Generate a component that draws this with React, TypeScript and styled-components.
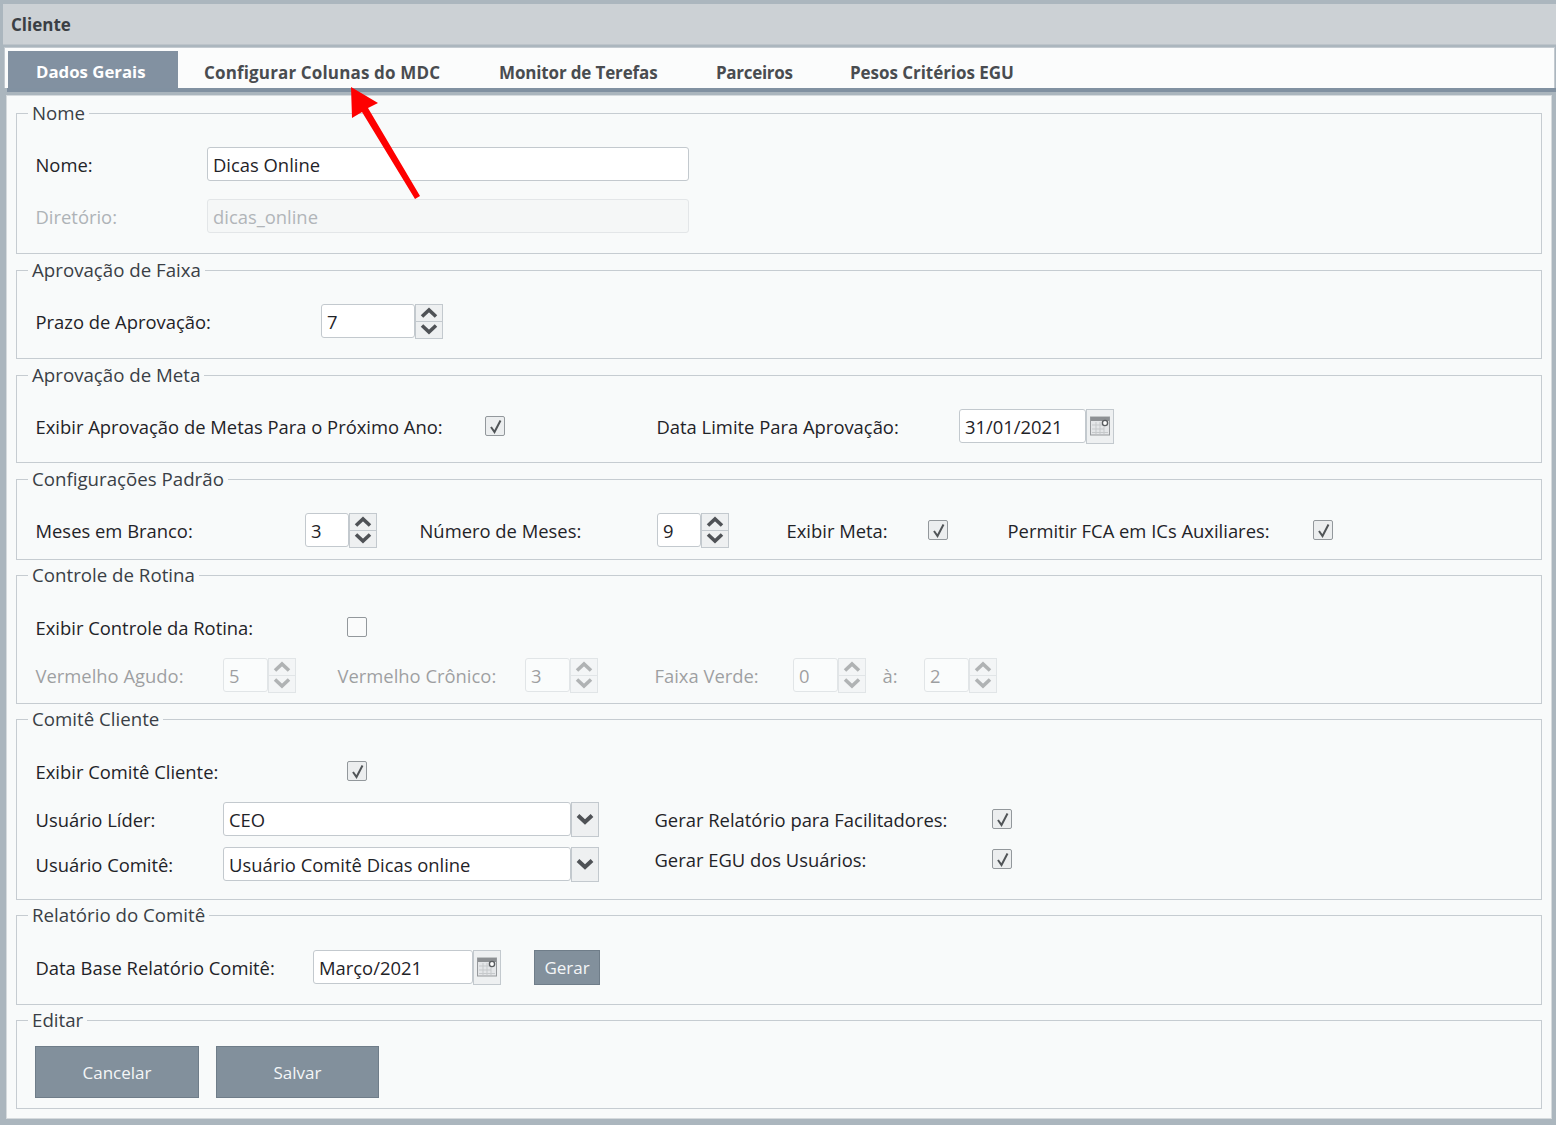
import React from "react";
import styled, { createGlobalStyle } from "styled-components";

const Global = createGlobalStyle`
  html, body { margin: 0; padding: 0; background: #abb6be; }
  body { font-family: "Open Sans", "Noto Sans", sans-serif; color: #1f2328; }
  * { box-sizing: border-box; }
`;

const Page = styled.div`
  position: relative;
  width: 1556px;
  height: 1125px;
  padding: 4px 0 0 3px;
  overflow: hidden;
`;
const Title = styled.div`
  height: 41px;
  background: #ccd1d5;
  border-bottom: 1px solid #bcc3c9;
  padding-left: 8px;
  display: flex;
  align-items: center;
  font-size: 17px;
  font-weight: 700;
  color: #3b3f44;
`;
const TabBar = styled.div`
  margin: 2px 0 0 1px;
  height: 41px;
  background: #fbfcfc;
  border: 1px solid #c3cad0;
  border-bottom: none;
  padding: 3px 0 0 3px;
  display: flex;
  width: 1551px;
`;
const ActiveTab = styled.div`
  flex: none;
  width: 170px;
  margin-right: 26px;
  padding: 3px 0 0 28px;
  display: flex;
  align-items: center;
  font-size: 16.8px;
  font-weight: 700;
  color: #ffffff;
  background: #8291a1;
`;
const Tab = styled.div<{ $w: number; $spacing?: number }>`
  flex: none;
  width: ${(p) => p.$w}px;
  padding-top: 5px;
  display: flex;
  align-items: center;
  font-size: 17px;
  font-weight: 700;
  letter-spacing: ${(p) => p.$spacing ?? 0}px;
  color: #494c50;
`;
const TabRule = styled.div`
  margin-left: 4px;
  width: 1550px;
  height: 7px;
  background: linear-gradient(#8191a1 0 4px, #aab5bd 4px);
`;
const Panel = styled.div`
  margin-left: 3px;
  width: 1546px;
  height: 1024px;
  background: #f8fafa;
  border: 1px solid #d5dadd;
  padding: 6px 9px;
  display: flex;
  flex-direction: column;
  gap: 5px;
`;
const Group = styled.fieldset<{ $top: number; $bottom: number; $gap?: number; $tight?: boolean }>`
  margin: ${(p) => (p.$tight ? "-1px 0 0" : "0")};
  min-width: 0;
  border: 1px solid #c6ccd1;
  padding: ${(p) => p.$top}px 19px ${(p) => p.$bottom}px;
  display: flex;
  flex-direction: column;
  gap: ${(p) => p.$gap ?? 14}px;
`;
const Legend = styled.legend`
  margin-left: -8px;
  padding: 0 4px;
  font-size: 18.7px;
  line-height: 22px;
  color: #3a3f46;
`;
const Row = styled.div<{ $muted?: boolean }>`
  height: 34px;
  display: flex;
  align-items: center;
  opacity: ${(p) => (p.$muted ? 0.42 : 1)};
`;
const Label = styled.label<{ $w: number }>`
  flex: none;
  width: ${(p) => p.$w}px;
  font-size: 18.4px;
  line-height: 34px;
  padding-top: 2px;
  text-indent: -0.5px;
  color: #1f2328;
  white-space: nowrap;
`;
const Muted = styled(Label)`
  color: #aeb3b7;
`;
const Input = styled.div<{ $w: number; $disabled?: boolean }>`
  flex: none;
  width: ${(p) => p.$w}px;
  height: 34px;
  background: ${(p) => (p.$disabled ? "#f5f7f7" : "#ffffff")};
  border: 1px solid ${(p) => (p.$disabled ? "#e3e6e8" : "#c3c9ce")};
  border-radius: 3px;
  padding: 1px 0 0 5px;
  font-size: 18.4px;
  line-height: 32px;
  color: ${(p) => (p.$disabled ? "#b1b5b9" : "#1f2328")};
`;
const Side = styled.div<{ $w: number }>`
  flex: none;
  width: ${(p) => p.$w}px;
  height: 35px;
  background: #eef0f1;
  border: 1px solid #c3c9ce;
  display: flex;
  align-items: center;
  justify-content: center;
`;
const SpinWrap = styled.div`
  flex: none;
  width: 28px;
  height: 35px;
  display: flex;
  flex-direction: column;
  background: #eef0f1;
  border: 1px solid #c3c9ce;
`;
const SpinPart = styled.div`
  flex: 1;
  display: flex;
  align-items: center;
  justify-content: center;
  & + & { border-top: 1px solid #c3c9ce; }
`;
const Check = styled.div<{ $off?: boolean }>`
  flex: none;
  width: 20px;
  height: 20px;
  background: ${(p) => (p.$off ? "#fafbfb" : "#eceeef")};
  border: 1.5px solid #93989c;
  border-radius: 2px;
  display: flex;
  align-items: center;
  justify-content: center;
`;
const Gap = styled.div<{ $w: number }>`
  flex: none;
  width: ${(p) => p.$w}px;
`;
const Columns = styled.div`
  display: flex;
  align-items: flex-start;
`;
const Column = styled.div<{ $w: number; $gap: number }>`
  flex: none;
  width: ${(p) => p.$w}px;
  display: flex;
  flex-direction: column;
  gap: ${(p) => p.$gap}px;
`;
const Button = styled.button<{ $w: number; $h: number }>`
  flex: none;
  width: ${(p) => p.$w}px;
  height: ${(p) => p.$h}px;
  margin: 0;
  padding: 1px 0 0;
  background: #82909c;
  border: 1px solid #6f7d89;
  color: #f4f6f7;
  font-family: inherit;
  font-size: 17px;
`;
const ButtonRow = styled.div`
  display: flex;
  gap: 17px;
  margin-left: -1px;
`;
const Arrow = styled.svg`
  position: absolute;
  left: 340px;
  top: 80px;
`;

const Chevron = ({ up, sw = 3.6 }: { up?: boolean; sw?: number }) => (
  <svg width="18" height="11" viewBox="0 0 18 11">
    <path d={up ? "M2 9.5 9 3l7 6.5" : "M2 1.5 9 8l7-6.5"} fill="none" stroke="#4f5256" strokeWidth={sw} />
  </svg>
);
const Spin = () => (
  <SpinWrap>
    <SpinPart><Chevron up /></SpinPart>
    <SpinPart><Chevron /></SpinPart>
  </SpinWrap>
);
const Drop = () => (
  <Side $w={28}><Chevron sw={4} /></Side>
);
const Tick = () => (
  <svg width="15" height="15" viewBox="0 0 15 15">
    <path d="M3 8 6.5 13 12.5 1.5" fill="none" stroke="#505457" strokeWidth="2" />
  </svg>
);
const Calendar = () => (
  <svg width="20" height="20" viewBox="0 0 20 20">
    <rect x="0.5" y="1" width="19" height="18" fill="#e4e6e8" stroke="#96999c" />
    <rect x="1" y="1" width="18" height="4" fill="#8d9093" />
    <path d="M2 9h12M2 13h12M2 16.5h16M6 6v12M10 6v12M14 6v12" stroke="#c6c9cb" strokeWidth="1" />
    <circle cx="15" cy="7" r="2.6" fill="#fff" stroke="#5a5d60" strokeWidth="1.4" />
  </svg>
);

export default function App() {
  return (
    <Page>
      <Global />
      <Title>Cliente</Title>
      <TabBar>
        <ActiveTab>Dados Gerais</ActiveTab>
        <Tab $w={295} $spacing={0.15}>Configurar Colunas do MDC</Tab>
        <Tab $w={217} $spacing={-0.15}>Monitor de Terefas</Tab>
        <Tab $w={134} $spacing={-0.3}>Parceiros</Tab>
        <Tab $w={180} $spacing={-0.05}>Pesos Critérios EGU</Tab>
      </TabBar>
      <TabRule />
      <Panel>
        <Group $top={23} $bottom={20} $gap={18}>
          <Legend>Nome</Legend>
          <Row><Label $w={171}>Nome:</Label><Input $w={482}>Dicas Online</Input></Row>
          <Row><Muted $w={171}>Diretório:</Muted><Input $w={482} $disabled>dicas_online</Input></Row>
        </Group>
        <Group $top={23} $bottom={20}>
          <Legend>Aprovação de Faixa</Legend>
          <Row><Label $w={285}>Prazo de Aprovação:</Label><Input $w={94}>7</Input><Spin /></Row>
        </Group>
        <Group $top={23} $bottom={19}>
          <Legend>Aprovação de Meta</Legend>
          <Row>
            <Label $w={449}>Exibir Aprovação de Metas Para o Próximo Ano:</Label>
            <Check><Tick /></Check>
            <Gap $w={152} />
            <Label $w={302}>Data Limite Para Aprovação:</Label>
            <Input $w={127}>31/01/2021</Input>
            <Side $w={28}><Calendar /></Side>
          </Row>
        </Group>
        <Group $top={23} $bottom={12}>
          <Legend>Configurações Padrão</Legend>
          <Row>
            <Label $w={269}>Meses em Branco:</Label><Input $w={44}>3</Input><Spin />
            <Gap $w={43} />
            <Label $w={237}>Número de Meses:</Label><Input $w={44}>9</Input><Spin />
            <Gap $w={58} />
            <Label $w={141}>Exibir Meta:</Label><Check><Tick /></Check>
            <Gap $w={60} />
            <Label $w={305}>Permitir FCA em ICs Auxiliares:</Label><Check><Tick /></Check>
          </Row>
        </Group>
        <Group $top={24} $bottom={11} $gap={14} $tight>
          <Legend>Controle de Rotina</Legend>
          <Row><Label $w={311}>Exibir Controle da Rotina:</Label><Check $off /></Row>
          <Row $muted>
            <Label $w={187}>Vermelho Agudo:</Label><Input $w={45}>5</Input><Spin />
            <Gap $w={42} />
            <Label $w={187}>Vermelho Crônico:</Label><Input $w={45}>3</Input><Spin />
            <Gap $w={57} />
            <Label $w={138}>Faixa Verde:</Label><Input $w={45}>0</Input><Spin />
            <Gap $w={17} />
            <Label $w={41}>à:</Label><Input $w={45}>2</Input><Spin />
          </Row>
        </Group>
        <Group $top={24} $bottom={18} $gap={14} $tight>
          <Legend>Comitê Cliente</Legend>
          <Row><Label $w={311}>Exibir Comitê Cliente:</Label><Check><Tick /></Check></Row>
          <Columns>
            <Column $w={619} $gap={11}>
              <Row><Label $w={187}>Usuário Líder:</Label><Input $w={348}>CEO</Input><Drop /></Row>
              <Row><Label $w={187}>Usuário Comitê:</Label><Input $w={348}>Usuário Comitê Dicas online</Input><Drop /></Row>
            </Column>
            <Column $w={400} $gap={6}>
              <Row><Label $w={337}>Gerar Relatório para Facilitadores:</Label><Check><Tick /></Check></Row>
              <Row><Label $w={337}>Gerar EGU dos Usuários:</Label><Check><Tick /></Check></Row>
            </Column>
          </Columns>
        </Group>
        <Group $top={24} $bottom={20} $tight>
          <Legend>Relatório do Comitê</Legend>
          <Row>
            <Label $w={277}>Data Base Relatório Comitê:</Label>
            <Input $w={160}>Março/2021</Input>
            <Side $w={28}><Calendar /></Side>
            <Gap $w={33} />
            <Button $w={66} $h={35}>Gerar</Button>
          </Row>
        </Group>
        <Group $top={15} $bottom={10} $tight>
          <Legend>Editar</Legend>
          <ButtonRow>
            <Button $w={164} $h={52}>Cancelar</Button>
            <Button $w={163} $h={52}>Salvar</Button>
          </ButtonRow>
        </Group>
      </Panel>
      <Arrow width="90" height="125" viewBox="340 80 90 125">
        <path d="M351 87 378 103 368 108 420 196 415 199 362 112 352 118Z" fill="#fe0000" />
      </Arrow>
    </Page>
  );
}
